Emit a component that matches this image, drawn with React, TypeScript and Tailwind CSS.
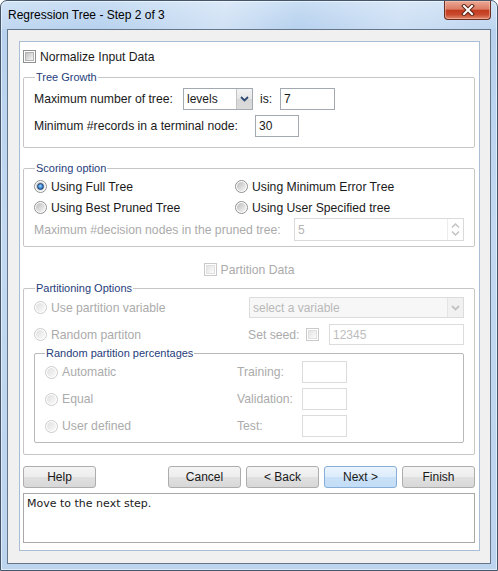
import React from "react";

function Checkbox({ disabled = false }: { disabled?: boolean }) {
  return disabled ? (
    <span className="flex h-[13px] w-[13px] shrink-0 items-center justify-center border border-[#cacaca] bg-white">
      <span className="h-[9px] w-[9px] border border-[#e0e0e0] bg-[linear-gradient(135deg,#e4e4e4,#fbfbfb)]" />
    </span>
  ) : (
    <span className="flex h-[13px] w-[13px] shrink-0 items-center justify-center border border-[#8e8f8f] bg-white">
      <span className="h-[9px] w-[9px] border border-[#b3b3b3] bg-[linear-gradient(135deg,#c2c2c2,#f5f5f5)]" />
    </span>
  );
}

function Radio({ checked = false, disabled = false }: { checked?: boolean; disabled?: boolean }) {
  if (disabled)
    return (
      <span className="flex h-[13px] w-[13px] shrink-0 items-center justify-center rounded-full border border-[#cbcbcb] bg-white">
        <span className="h-[9px] w-[9px] rounded-full bg-[linear-gradient(135deg,#e0e0e0,#fafafa)]" />
      </span>
    );
  return (
    <span className="flex h-[13px] w-[13px] shrink-0 items-center justify-center rounded-full border border-[#8e8f8f] bg-white">
      <span className="flex h-[9px] w-[9px] items-center justify-center rounded-full bg-[linear-gradient(135deg,#bdbdbd,#f6f6f6)]">
        {checked && (
          <span className="h-[7px] w-[7px] rounded-full border border-[#1d4070] bg-[radial-gradient(circle_at_45%_40%,#9ad8ff_0%,#3a82d0_55%,#1a4f96_100%)]" />
        )}
      </span>
    </span>
  );
}

function Chevron({ color }: { color: string }) {
  return (
    <svg width="9" height="6" viewBox="0 0 9 6">
      <path d="M1 1 L4.5 4.5 L8 1" stroke={color} strokeWidth="1.8" fill="none" />
    </svg>
  );
}

function Btn({ label, hot = false }: { label: string; hot?: boolean }) {
  return hot ? (
    <div className="flex h-[22px] w-[73px] items-center justify-center rounded-[3px] border border-[#86aed8] bg-[linear-gradient(to_bottom,#eaf4fd_0%,#dcecfb_50%,#c9e1f8_51%,#c3ddf6_100%)] text-[12px] text-[#1a1a1a]">
      {label}
    </div>
  ) : (
    <div className="flex h-[22px] w-[73px] items-center justify-center rounded-[3px] border border-[#adadad] bg-[linear-gradient(to_bottom,#f4f4f4_0%,#ededed_50%,#e0e0e0_51%,#d8d8d8_100%)] text-[12px] text-[#1a1a1a]">
      {label}
    </div>
  );
}

export default function App() {
  const label = "whitespace-nowrap text-[12.2px] leading-[14px] text-[#1a1a1a]";
  const dlabel = "whitespace-nowrap text-[12.2px] leading-[14px] text-[#ababab]";
  return (
    <div className="flex h-[571px] w-[498px] flex-col overflow-hidden rounded-t-[7px] border border-[#44566b] bg-[linear-gradient(to_bottom,#c9def4_0%,#b7d1ee_5%,#c2d9f1_40%,#bcd4ee_100%)] font-['Liberation_Sans',Arial,sans-serif] shadow-[inset_0_0_0_1px_rgba(255,255,255,0.55)]">
      {/* title bar */}
      <div className="flex h-[28px] shrink-0 items-start justify-between bg-[linear-gradient(100deg,rgba(255,255,255,0.15)_0%,rgba(255,255,255,0)_20%,rgba(255,255,255,0.35)_45%,rgba(255,255,255,0)_60%,rgba(255,255,255,0.3)_80%,rgba(255,255,255,0.1)_100%)] pl-[7px] pr-[6px]">
        <span className="self-center whitespace-nowrap text-[12px] leading-[14px] text-black">
          Regression Tree - Step 2 of 3
        </span>
        <div className="flex h-[19px] w-[47px] items-center justify-center rounded-b-[4px] border border-t-0 border-[#6a2e24] bg-[linear-gradient(to_bottom,#eaa896_0%,#db7d64_45%,#c43b1f_52%,#c9492d_75%,#e08a6e_100%)] shadow-[inset_0_0_0_1px_rgba(255,210,190,0.45)]">
          <svg width="14" height="12" viewBox="0 0 14 12">
            <path d="M3 2 L11 10 M11 2 L3 10" stroke="#5a2418" strokeWidth="4" strokeLinecap="square" />
            <path d="M3 2 L11 10 M11 2 L3 10" stroke="#ffffff" strokeWidth="2" strokeLinecap="square" />
          </svg>
        </div>
      </div>

      {/* client */}
      <div className="mx-[6px] mb-[6px] flex flex-1 flex-col border border-[#66768a] bg-[#f0f0f0] pb-[12px] pl-[11px] pr-[10px] pt-[11px]">
        <div className="flex flex-1 flex-col border border-[#a9bdd5] bg-white pl-[3px] pr-[4px]">
          {/* normalize */}
          <div className="mt-[7px] flex h-[15px] items-center">
            <Checkbox />
            <span className={`ml-[4px] ${label}`}>Normalize Input Data</span>
          </div>

          {/* Tree Growth */}
          <div className="relative mt-[13px] rounded-[2px] border border-[#c6c6c6] px-[10px] pb-[10px] pt-[10px]">
            <span className="absolute left-[11px] top-[-7px] bg-white px-[1px] text-[11px] leading-[13px] text-[#1f3d7a]">
              Tree Growth
            </span>
            <div className="flex h-[22px] items-center">
              <span className={`w-[149px] ${label}`}>Maximum number of tree:</span>
              <div className="flex h-[22px] w-[70px] items-stretch border border-[#a3a9b1] bg-white">
                <span className="flex flex-1 items-center pl-[3px] text-[12px] text-[#1a1a1a]">levels</span>
                <span className="flex w-[16px] items-center justify-center border-l border-[#c4c4c4] bg-[linear-gradient(to_bottom,#f3f3f3,#e6e6e6_50%,#d7d7d7_51%,#dcdcdc)]">
                  <Chevron color="#2c4a72" />
                </span>
              </div>
              <span className={`ml-[7px] w-[20px] ${label}`}>is:</span>
              <div className="flex h-[22px] w-[55px] items-center border border-[#a3a9b1] bg-white pl-[3px] text-[12px] text-[#1a1a1a]">
                7
              </div>
            </div>
            <div className="mt-[5px] flex h-[22px] items-center">
              <span className={`w-[221px] ${label}`}>Minimum #records in a terminal node:</span>
              <div className="flex h-[22px] w-[44px] items-center border border-[#a3a9b1] bg-white pl-[3px] text-[12px] text-[#1a1a1a]">
                30
              </div>
            </div>
          </div>

          {/* Scoring option */}
          <div className="relative mt-[20px] rounded-[2px] border border-[#c6c6c6] px-[10px] pb-[5px] pt-[7px]">
            <span className="absolute left-[11px] top-[-7px] bg-white px-[1px] text-[11px] leading-[13px] text-[#1f3d7a]">
              Scoring option
            </span>
            <div className="flex h-[21px] items-center">
              <div className="flex w-[201px] items-center">
                <Radio checked />
                <span className={`ml-[4px] ${label}`}>Using Full Tree</span>
              </div>
              <div className="flex items-center">
                <Radio />
                <span className={`ml-[4px] ${label}`}>Using Minimum Error Tree</span>
              </div>
            </div>
            <div className="flex h-[21px] items-center">
              <div className="flex w-[201px] items-center">
                <Radio />
                <span className={`ml-[4px] ${label}`}>Using Best Pruned Tree</span>
              </div>
              <div className="flex items-center">
                <Radio />
                <span className={`ml-[4px] ${label}`}>Using User Specified tree</span>
              </div>
            </div>
            <div className="flex h-[23px] items-center">
              <span className={`w-[260px] ${dlabel}`}>Maximum #decision nodes in the pruned tree:</span>
              <div className="flex h-[23px] flex-1 items-stretch border border-[#dadada] bg-white">
                <span className="flex flex-1 items-center pl-[3px] text-[12px] text-[#b4b4b4]">5</span>
                <span className="flex w-[16px] flex-col items-center justify-center gap-[3px] border-l border-[#ececec]">
                  <svg width="9" height="5" viewBox="0 0 9 5">
                    <path d="M1 4.5 L4.5 1 L8 4.5" stroke="#c4c4c4" strokeWidth="1.5" fill="none" />
                  </svg>
                  <svg width="9" height="5" viewBox="0 0 9 5">
                    <path d="M1 0.5 L4.5 4 L8 0.5" stroke="#c4c4c4" strokeWidth="1.5" fill="none" />
                  </svg>
                </span>
              </div>
            </div>
          </div>

          {/* Partition data */}
          <div className="mt-[15px] flex h-[15px] items-center justify-center">
            <Checkbox disabled />
            <span className={`ml-[4px] ${dlabel}`}>Partition Data</span>
          </div>

          {/* Partitioning Options */}
          <div className="relative mt-[11px] rounded-[2px] border border-[#c6c6c6] px-[10px] pb-[11px] pt-[8px]">
            <span className="absolute left-[11px] top-[-7px] bg-white px-[1px] text-[11px] leading-[13px] text-[#1f3d7a]">
              Partitioning Options
            </span>
            <div className="flex h-[21px] items-center">
              <div className="flex w-[215px] items-center">
                <Radio disabled />
                <span className={`ml-[4px] ${dlabel}`}>Use partition variable</span>
              </div>
              <div className="flex h-[21px] flex-1 items-stretch border border-[#dcdcdc] bg-[#f7f7f7]">
                <span className="flex flex-1 items-center pl-[3px] text-[12px] text-[#b9b9b9]">select a variable</span>
                <span className="flex w-[16px] items-center justify-center border-l border-[#e4e4e4] bg-[#f1f1f1]">
                  <Chevron color="#c2c2c2" />
                </span>
              </div>
            </div>
            <div className="mt-[6px] flex h-[21px] items-center">
              <div className="flex w-[214px] items-center">
                <Radio disabled />
                <span className={`ml-[4px] ${dlabel}`}>Random partiton</span>
              </div>
              <span className={`w-[58px] ${dlabel}`}>Set seed:</span>
              <Checkbox disabled />
              <div className="ml-[10px] flex h-[21px] flex-1 items-center border border-[#dcdcdc] bg-white pl-[3px] text-[12px] text-[#bdbdbd]">
                12345
              </div>
            </div>

            {/* Random partition percentages */}
            <div className="relative mt-[8px] rounded-[2px] border border-[#b9b9b9] pb-[5px] pl-[10px] pr-[10px] pt-[7px]">
              <span className="absolute left-[10px] top-[-7px] bg-white px-[1px] text-[11px] leading-[13px] text-[#1f3d7a]">
                Random partition percentages
              </span>
              <div className="flex h-[22px] items-center">
                <div className="flex w-[192px] items-center">
                  <Radio disabled />
                  <span className={`ml-[4px] ${dlabel}`}>Automatic</span>
                </div>
                <span className={`w-[65px] ${dlabel}`}>Training:</span>
                <div className="h-[22px] w-[45px] border border-[#dcdcdc] bg-white" />
              </div>
              <div className="mt-[5px] flex h-[22px] items-center">
                <div className="flex w-[192px] items-center">
                  <Radio disabled />
                  <span className={`ml-[4px] ${dlabel}`}>Equal</span>
                </div>
                <span className={`w-[65px] ${dlabel}`}>Validation:</span>
                <div className="h-[22px] w-[45px] border border-[#dcdcdc] bg-white" />
              </div>
              <div className="mt-[5px] flex h-[22px] items-center">
                <div className="flex w-[192px] items-center">
                  <Radio disabled />
                  <span className={`ml-[4px] ${dlabel}`}>User defined</span>
                </div>
                <span className={`w-[65px] ${dlabel}`}>Test:</span>
                <div className="h-[22px] w-[45px] border border-[#dcdcdc] bg-white" />
              </div>
            </div>
          </div>

          {/* Buttons */}
          <div className="mt-[11px] flex h-[22px] items-center justify-between">
            <Btn label="Help" />
            <div className="flex gap-[5px]">
              <Btn label="Cancel" />
              <Btn label="< Back" />
              <Btn label="Next >" hot />
              <Btn label="Finish" />
            </div>
          </div>

          {/* message */}
          <div className="mt-[5px] h-[50px] border border-[#a8a8a8] bg-white pl-[3px] pt-[3px] font-['DejaVu_Sans',sans-serif] text-[11px] leading-[13px] text-[#1a1a1a]">
            Move to the next step.
          </div>
        </div>
      </div>
    </div>
  );
}
